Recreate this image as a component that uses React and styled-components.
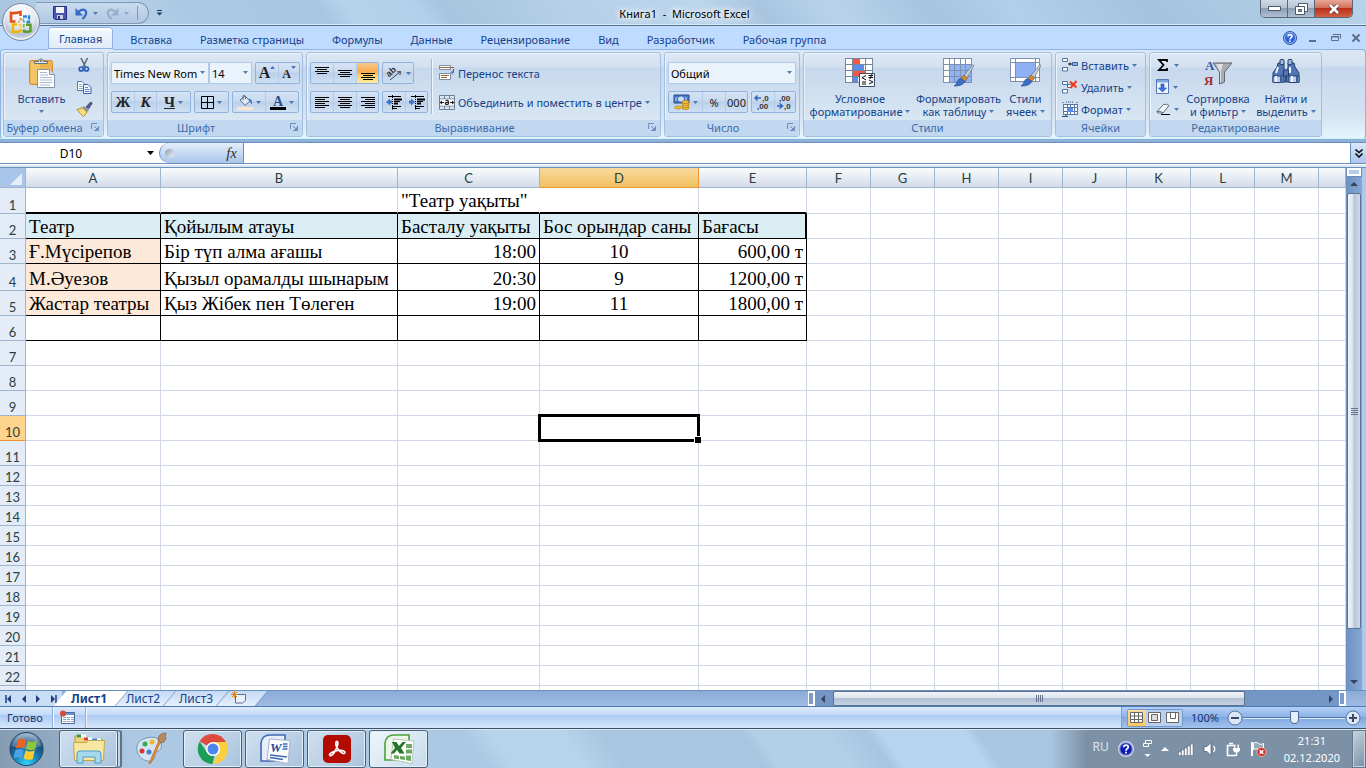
import React from "react";
import styled, { createGlobalStyle, css } from "styled-components";

const GlobalStyle = createGlobalStyle`
  * {
    box-sizing: border-box;
  }

  body {
    margin: 0;
    background: #bfdbff;
    font-family: "Noto Sans", "Open Sans", sans-serif;
    font-size: 11px;
    color: #15428b;
  }

  button,
  input,
  select {
    font: inherit;
    color: inherit;
    margin: 0;
    padding: 0;
    border: 0;
    background: none;
  }
`;

const Window = styled.div`
  height: 100vh;
  display: flex;
  flex-direction: column;
  overflow: hidden;
`;

/* ---------- title bar ---------- */

const TitleBar = styled.header`
  position: relative;
  height: 26px;
  flex: none;
  display: flex;
  align-items: flex-start;
  border-bottom: 1px solid #56718f;
  box-shadow: inset 0 -1px 0 #d9ebf8;
  background: linear-gradient(
    55deg,
    #a7c2dc 0%,
    #b9d5ed 8%,
    #adc8e2 14%,
    #a9c5e0 24%,
    #b7d3ec 26%,
    #b3cfe9 31%,
    #a8c4de 33%,
    #b5d0e8 42%,
    #bad5ec 52%,
    #a9c4df 56%,
    #b8d3eb 61%,
    #a8c3de 68%,
    #b2cee8 74%,
    #a6c2dd 84%,
    #b6d3ea 100%
  );
`;

const OfficeButton = styled.button`
  position: absolute;
  left: 1px;
  top: 2px;
  z-index: 3;
  width: 40px;
  height: 40px;
`;

const QuickAccess = styled.div`
  display: flex;
  align-items: center;
  height: 22px;
  margin: 2px 0 0 36px;
  padding: 0 10px 0 17px;
  border: 1px solid #8299b5;
  border-left: 0;
  border-radius: 0 11px 11px 0;
  background: linear-gradient(#c8daee, #b1c8e2);
`;

const QuickButton = styled.button`
  display: flex;
  align-items: center;
  gap: 5px;
  height: 18px;
  margin-right: 8px;
  opacity: ${(p) => (p.$dim ? 0.45 : 1)};
`;

const QuickDivider = styled.span`
  width: 1px;
  height: 14px;
  background: #8299b5;
`;

const QuickMore = styled.button`
  display: flex;
  align-self: center;
  margin-left: 7px;
`;

const Title = styled.h1`
  position: absolute;
  inset: 0;
  margin: 0;
  padding-left: 3px;
  text-align: center;
  line-height: 27px;
  font-size: 11px;
  font-weight: 400;
  color: #000;
  text-shadow: 0 0 6px #fff, 0 0 8px #fff, 0 0 10px #fff;
  pointer-events: none;
`;

const WindowButtons = styled.div`
  display: flex;
  height: 18px;
  margin: 0 13px 0 auto;
  border: 1px solid #5b6776;
  border-top: 0;
  border-radius: 0 0 5px 5px;
  overflow: hidden;
`;

const WindowButton = styled.button`
  width: ${(p) => (p.$close ? 37 : 27)}px;
  display: flex;
  align-items: center;
  justify-content: center;
  border-right: ${(p) => (p.$close ? 0 : 1)}px solid #5b6776;
  background: ${(p) =>
    p.$close
      ? "linear-gradient(#e8a898, #d4715a 45%, #b8301a 50%, #d2603f)"
      : "linear-gradient(#cfdae6, #b5c3d3 45%, #8d9fb4 50%, #aebfd2)"};
`;

/* ---------- ribbon ---------- */

const TabRow = styled.nav`
  display: flex;
  flex: none;
  height: 23px;
  padding: 1px 5px 0 45px;
  background: #bfdbff;
`;

const Tab = styled.button`
  padding: 0 14px;
  height: 24px;
  line-height: 23px;
  white-space: nowrap;
  ${(p) =>
    p.$active &&
    css`
      position: relative;
      z-index: 1;
      margin: 0 3px;
      padding: 0 11px;
      box-shadow: inset 0 0 0 1px #8db2e3, inset 0 2px 0 1px #fff;
      border-radius: 4px 4px 0 0;
      background: linear-gradient(#f4f9fe, #dfeaf7);
      border-bottom: 2px solid #dfeaf7;
    `}
`;

const TabTools = styled.div`
  display: flex;
  align-items: center;
  margin-left: auto;
  gap: 8px;

  button {
    display: flex;
  }
`;

const Ribbon = styled.section`
  display: flex;
  flex: none;
  gap: 3px;
  height: 90px;
  padding: 2px 2px 0;
  border: 1px solid #8db2e3;
  border-bottom: 1px solid #c9f3fb;
  border-radius: 4px;
  background: linear-gradient(#dce7f4, #d3e1f1 16px, #c5d7ee 17px, #d5e4f3 66px, #e5f5fc);
`;

const Group = styled.div`
  display: flex;
  flex-direction: column;
  width: ${(p) => p.$width}px;
  height: 85px;
  border: 1px solid #a3bfdf;
  border-radius: 3px;
  box-shadow: inset 1px 1px 0 #eaf2fa;
  background: linear-gradient(#dee8f5, #d3e0f0 14px, #c7d8ed 15px, #d9e7f3 68px);
`;

const GroupBody = styled.div`
  display: flex;
  flex: 1;
  min-height: 0;
  padding: 0 3px;
`;

const GroupTitle = styled.div`
  position: relative;
  height: 16px;
  line-height: 16px;
  padding-right: ${(p) => (p.$launcher ? 18 : 0)}px;
  text-align: center;
  white-space: nowrap;
  color: #3e6aaa;
  background: #c1d8f0;
  border-radius: 0 0 2px 2px;
`;

const Launcher = styled.button`
  position: absolute;
  right: 4px;
  top: 3px;
  display: flex;
`;

const Stack = styled.div`
  display: flex;
  flex-direction: column;
  gap: 7px;
  padding-top: 9px;
`;

const Line = styled.div`
  display: flex;
  gap: 3px;
`;

const ButtonSet = styled.div`
  display: flex;
  height: 22px;
  border: 1px solid #92b3dc;
  border-radius: 2px;
  background: linear-gradient(#d5e3f4, #c9daef 45%, #bcd0ea 50%, #cde0f3);
`;

const Tool = styled.button`
  display: flex;
  align-items: center;
  justify-content: center;
  gap: 3px;
  width: ${(p) => p.$width ?? 23}px;
  color: #222;
  background: ${(p) => (p.$on ? "linear-gradient(#f7c98d, #fba94b 45%, #ffce69 60%, #ffec9e)" : "none")};

  & + & {
    border-left: 1px solid #b3cbe8;
  }
`;

const SizeTool = styled(Tool)`
  align-items: ${(p) => (p.$small ? "center" : "flex-start")};
  gap: 0;
  padding-top: 2px;

  svg {
    align-self: flex-start;
  }
`;

const Letter = styled.span`
  font-family: "Liberation Serif", serif;
  font-size: ${(p) => p.$size ?? 15}px;
  line-height: 16px;
  font-weight: 700;
  font-style: ${(p) => (p.$italic ? "italic" : "normal")};
  text-decoration: ${(p) => (p.$underline ? "underline" : "none")};
`;

const SelectFrame = styled.label`
  position: relative;
  display: flex;
  width: ${(p) => p.$width}px;
  height: 22px;

  select {
    appearance: none;
    width: 100%;
    padding: 0 10px 0 2px;
    border: 1px solid #b0cbea;
    color: #000;
    background: #eaf2fb;
  }

  & + & {
    margin-left: -3px;
  }

  svg {
    position: absolute;
    right: 4px;
    top: 9px;
    pointer-events: none;
  }
`;

const Separator = styled.span`
  width: 2px;
  height: 55px;
  margin: 6px 6px 0 3px;
  background: linear-gradient(90deg, #9ebad9 50%, #eef5fb 50%);
`;

const TextButton = styled.button`
  display: flex;
  align-items: center;
  gap: 3px;
  height: 22px;
  white-space: nowrap;
`;

const SmallStack = styled.div`
  display: flex;
  flex-direction: column;
  padding: 1px 0 0 ${(p) => p.$left ?? 3}px;
`;

const BigButton = styled.button`
  display: flex;
  flex-direction: column;
  align-items: center;
  width: ${(p) => p.$width}px;
  padding-top: 5px;
  line-height: 13px;
  white-space: nowrap;

  & > svg {
    margin-bottom: 4px;
    flex: none;
  }
`;

const BigLine = styled.span`
  display: flex;
  align-items: center;
  gap: 3px;
  min-height: 13px;
`;

/* ---------- formula bar ---------- */

const FormulaBar = styled.div`
  display: flex;
  flex: none;
  height: 25px;
  border-top: 3px solid #8fb0d8;
  box-shadow: inset 0 1px 0 #6b8fbd;
  border-bottom: 1px solid #6b8fbd;
  background: #fff;
`;

const NameBox = styled.label`
  display: flex;
  align-items: center;
  width: 159px;
  padding: 1px 5px 0 1px;

  input {
    flex: 1;
    min-width: 0;
    padding-right: 6px;
    text-align: center;
    font-size: 12px;
    color: #000;
    outline: 0;
  }
`;

const FunctionArea = styled.div`
  display: flex;
  align-items: center;
  justify-content: space-between;
  width: 85px;
  margin-top: 1px;
  padding: 0 6px 0 5px;
  border: 1px solid #6b8fbd;
  border-width: 0 1px 0 1px;
  border-radius: 11px 0 0 11px;
  background: linear-gradient(#e4eefa, #c7daf3 50%, #a9c5eb);
`;

const Dimple = styled.span`
  width: 9px;
  height: 9px;
  border-radius: 50%;
  background: linear-gradient(135deg, #8d9bb0, #eef3fa);
`;

const FxButton = styled.button`
  font: italic 400 15px "Liberation Serif", serif;
  color: #333;
`;

const FormulaInput = styled.input`
  flex: 1;
  min-width: 0;
  outline: 0;
`;

const Expand = styled.button`
  display: flex;
  align-items: center;
  justify-content: center;
  width: 16px;
  margin-top: 1px;
  border-left: 1px solid #6b8fbd;
  background: linear-gradient(#d9e8fb, #aac6ec);
`;

const Splitter = styled.div`
  flex: none;
  height: 4px;
  background: #dbe8f7;
  border-bottom: 1px solid #6b8fbd;
  border-top: 1px solid #fff;
`;

/* ---------- worksheet ---------- */

const Workspace = styled.main`
  display: flex;
  flex: 1;
  min-height: 0;
`;

const SheetArea = styled.div`
  flex: 1;
  min-width: 0;
  overflow: hidden;
  background: #fff;
`;

const Sheet = styled.table`
  width: 100%;
  table-layout: fixed;
  border-collapse: separate;
  border-spacing: 0;

  th {
    padding: 0;
    font-family: Lato, "Noto Sans", sans-serif;
    font-size: 13px;
    line-height: 16px;
    font-weight: 400;
    color: #2a4040;
  }
`;

const ColHead = styled.th`
  height: 20px;
  border-right: 1px solid ${(p) => (p.$on ? "#f29536" : "#9eb6ce")};
  border-bottom: 1px solid ${(p) => (p.$on ? "#f29536" : "#9eb6ce")};
  background: ${(p) => (p.$on ? "linear-gradient(#f9d99f, #f1c15f)" : "linear-gradient(#f9fcfd, #d3dbe9)")};
`;

const Corner = styled.th`
  height: 20px;
  border: 1px solid #9eb6ce;
  border-width: 0 1px 1px 0;
  background: #a9c4e9;

  svg {
    display: block;
    margin: 2px 3px 0 auto;
  }
`;

const RowHead = styled.th`
  && {
    vertical-align: bottom;
  }
  border-right: 1px solid ${(p) => (p.$on ? "#f29536" : "#9eb6ce")};
  border-bottom: 1px solid ${(p) => (p.$on ? "#f29536" : "#9eb6ce")};
  background: ${(p) => (p.$on ? "#ffd58d" : "#e4ecf7")};
`;

const Row = styled.tr`
  height: ${(p) => p.$height}px;
`;

const Cell = styled.td`
  position: relative;
  padding: 0 3px 1px;
  vertical-align: bottom;
  white-space: nowrap;
  font-family: "Liberation Serif", serif;
  font-size: 19px;
  line-height: 21px;
  color: #000;
  text-align: ${(p) => p.$align ?? "left"};
  background: ${(p) => p.$fill ?? "#fff"};
  border-right: ${(p) => (p.$thickRight ? 2 : 1)}px solid
    ${(p) => (p.$spill ? "#fff" : p.$boxed ? "#000" : "#d0d7e5")};
  border-bottom: ${(p) => (p.$thickBottom ? 2 : 1)}px solid
    ${(p) => (p.$boxed || p.$thickBottom ? "#000" : "#d0d7e5")};
`;

const Selection = styled.span`
  position: absolute;
  z-index: 1;
  inset: -2px;
  border: 3px solid #000;

  &::after {
    content: "";
    position: absolute;
    right: -4px;
    bottom: -4px;
    width: 6px;
    height: 6px;
    background: #000;
    border: 1px solid #fff;
    border-width: 1px 0 0 1px;
  }
`;

const VScroll = styled.div`
  display: flex;
  flex-direction: column;
  align-items: center;
  width: 16px;
  background: linear-gradient(90deg, #6c92c2, #86a7d2);
`;

const VSplit = styled.span`
  width: 14px;
  height: 8px;
  border: 2px solid #fff;
  outline: 1px solid #6b8fbd;
  background: #b7cce6;
`;

const ScrollArrow = styled.button`
  display: flex;
  align-items: center;
  justify-content: center;
  width: 16px;
  height: 16px;
  flex: none;
`;

const VThumb = styled.div`
  display: flex;
  flex-direction: column;
  align-items: center;
  justify-content: center;
  gap: 1px;
  width: 14px;
  flex: 1;
  margin: 1px 0 45px;
  border: 1px solid #5b7390;
  border-radius: 2px;
  background: linear-gradient(90deg, #f1f5fa, #dbe3ed 40%, #b6c6d9 50%, #cfdbe8);
`;

const Grip = styled.i`
  width: ${(p) => (p.$vertical ? 1 : 7)}px;
  height: ${(p) => (p.$vertical ? 7 : 1)}px;
  background: #64748a;
`;

const Edge = styled.div`
  width: 4px;
  background: #aec9ee;
`;

/* ---------- sheet tabs ---------- */

const SheetBar = styled.div`
  display: flex;
  flex: none;
  height: 17px;
  border-top: 1px solid #6b8fbd;
  border-bottom: 1px solid #4e7ab5;
  background: linear-gradient(#8aabd9, #a0bbe1);
`;

const SheetNav = styled.div`
  display: flex;
  align-items: center;
  justify-content: space-between;
  width: 62px;
  padding: 0 5px;
  background: #c9ddf6;

  button {
    display: flex;
  }
`;

const SheetTabs = styled.div`
  display: flex;
`;

const SheetTab = styled.button`
  position: relative;
  width: ${(p) => p.$width ?? 54}px;
  margin-right: ${(p) => (p.$active ? 0 : -1)}px;
  font-size: 12px;
  line-height: 14px;
  font-weight: ${(p) => (p.$active ? 700 : 400)};
  z-index: ${(p) => (p.$active ? 2 : 1)};

  &::before {
    content: "";
    position: absolute;
    z-index: -1;
    inset: 0 -6px 0 ${(p) => (p.$active ? -2 : 0)}px;
    border: 1px solid #7f9fc9;
    border-width: 0 1px 0 ${(p) => (p.$active ? 0 : 1)}px;
    transform: skewX(-40deg);
    background: ${(p) => (p.$active ? "#fff" : "linear-gradient(#c3d9f5, #e6f0fc)")};
  }
`;

const HScroll = styled.div`
  display: flex;
  flex: 0 1 538px;
  margin: 0 20px 0 auto;
  background: #7396c4;
`;

const HSplit = styled.span`
  width: 7px;
  height: 15px;
  border: 2px solid #fff;
  border-left-width: 1px;
  background: #7d9dc8;
`;

const HThumb = styled.div`
  display: flex;
  align-items: center;
  justify-content: center;
  gap: 1px;
  flex: 0 1 412px;
  margin-left: 2px;
  height: 15px;
  border: 1px solid #5b7390;
  border-radius: 2px;
  background: linear-gradient(#f1f5fa, #dbe3ed 45%, #b0c1d4 50%, #c6d3e1);
`;

const HTrackEnd = styled.div`
  flex: 1;
  display: flex;
  justify-content: flex-end;
`;

/* ---------- status bar ---------- */

const StatusBar = styled.div`
  display: flex;
  align-items: stretch;
  flex: none;
  height: 22px;
  border-bottom: 1px solid #3c4f68;
  color: #15356e;
  background: linear-gradient(#dceafc, #c4dbf9 35%, #aecbf3 40%, #d3e4fb 95%);
`;

const StatusPart = styled.div`
  display: flex;
  align-items: center;
  padding: 0 9px 1px 7px;
  border-right: 1px solid #8fb0dd;
  box-shadow: 1px 0 0 #f2f7fe;
`;

const StatusRight = styled.div`
  display: flex;
  align-items: center;
  margin-left: auto;
  padding: 0 5px;
  gap: 8px;
  border-left: 1px solid #7f9fc9;
  background: linear-gradient(#b3cff6, #8fb4e8 45%, #7fa7e2 50%, #a3c3ef);
`;

const Views = styled.div`
  display: flex;
  height: 18px;
  border: 1px solid #7398cc;
  border-radius: 2px;
`;

const ViewButton = styled.button`
  display: flex;
  align-items: center;
  justify-content: center;
  width: 18px;
  background: ${(p) => (p.$on ? "linear-gradient(#fbdba0, #ffc65e)" : "#b9d0ee")};
`;

const Zoom = styled.div`
  display: flex;
  align-items: center;

  button {
    display: flex;
  }

  input {
    appearance: none;
    width: 102px;
    height: 14px;
    background: linear-gradient(#0000 6px, #5276ab 6px, #5276ab 7px, #e1ecfb 7px, #e1ecfb 8px, #0000 8px);
  }

  input::-webkit-slider-thumb {
    appearance: none;
    width: 9px;
    height: 13px;
    border: 1px solid #4d6a98;
    border-radius: 1px 1px 5px 5px;
    background: #e6eef9;
  }
`;

/* ---------- taskbar ---------- */

const Taskbar = styled.footer`
  display: flex;
  flex: none;
  height: 39px;
  border-top: 1px solid #dbe9f5;
  background:
    linear-gradient(90deg, #8198aee8 0, #8198ae88 70px, #8198ae00 130px, #8198ae00 calc(100% - 315px), #7d91a6 calc(100% - 280px)),
    linear-gradient(55deg, #adc8e2 0 35%, #b8d4ed 37% 42%, #a9c5df 45% 55%, #b4cfe8 56% 61%, #a9c4df 64%, #b7d3ed 65% 71%, #a9c5e0 72% 100%);
`;

const StartButton = styled.button`
  display: flex;
  width: 36px;
  margin: 0 14px 0 9px;
`;

const TaskList = styled.div`
  display: flex;
  gap: 3px;
`;

const TaskButton = styled.button`
  display: flex;
  align-items: center;
  justify-content: center;
  width: 59px;
  height: 38px;
  border: 1px solid ${(p) => (p.$idle ? "transparent" : "#495f78")};
  border-radius: 3px;
  box-shadow: ${(p) =>
    p.$idle
      ? "none"
      : `inset 0 0 0 1px #e3eff9${p.$stacked ? ", 3px 0 0 -1px #c3d6e8, 4px 0 0 #5d738b" : ""}`};
  background: ${(p) =>
    p.$idle ? "none" : p.$active ? "linear-gradient(135deg, #eff6fb, #c6dbec)" : "linear-gradient(135deg, #cfdfee, #aac4de)"};
`;

const Tray = styled.div`
  display: flex;
  align-items: center;
  margin-left: auto;
  padding-right: 12px;
  gap: 9px;
  color: #fff;
`;

const Language = styled.span`
  font-size: 12px;
  line-height: 16px;
  padding-bottom: 4px;
  color: #dfe6ee;
`;

const Clock = styled.time`
  margin-left: 8px;
  text-align: center;
  font-size: 11px;
  line-height: 17px;
`;

const ShowDesktop = styled.button`
  width: 14px;
  border: 1px solid #66788c;
  box-shadow: inset 0 0 0 1px #c2d0dd;
  background: linear-gradient(135deg, #c5d2de, #7d91a6);
`;

/* ---------- icons ---------- */

const CaretMark = styled.svg`
  flex: none;
`;

const Caret = ({ color = "#4c78b4", w = 5 }) => (
  <CaretMark width={w} height={w > 5 ? 4 : 3} viewBox="0 0 6 3" preserveAspectRatio="none">
    <path d="M0 0h6L3 3z" fill={color} />
  </CaretMark>
);

const Triangle = ({ dir, color = "#33435c", size = 8, bar }) => {
  const turn = { up: 0, right: 90, down: 180, left: 270 }[dir];
  return (
    <svg width={size} height={size} viewBox="0 0 8 8">
      <g transform={`rotate(${turn} 4 4)`}>
        <path d="M0 6 4 2l4 4z" fill={color} />
        {bar && <path d="M0 1h8" stroke={color} strokeWidth="1.5" />}
      </g>
    </svg>
  );
};

const OfficeLogo = () => (
  <svg width="40" height="40" viewBox="0 0 40 40">
    <defs>
      <radialGradient id="orb" cx=".5" cy=".25" r=".8">
        <stop offset="0" stopColor="#fff" />
        <stop offset=".5" stopColor="#e3e8f0" />
        <stop offset=".75" stopColor="#b6c1d1" />
        <stop offset="1" stopColor="#f4f7fb" />
      </radialGradient>
    </defs>
    <circle cx="20" cy="20" r="18.500" fill="url(#orb)" stroke="#7489a5" />
    <circle cx="20" cy="20" r="17" fill="none" stroke="#fff" opacity=".8" />
    <g fill="none">
      <path d="M14.500 19.500H10V11q4.500.5 9.500-1v4" stroke="#e4501a" strokeWidth="2.600" />
      <path d="M19.700 16v2.500M17 19.700h1.500" stroke="#f08a2c" strokeWidth="2" />
      <path d="M22 14.500h6V20h-3" stroke="#2f86d6" strokeWidth="2.400" strokeDasharray="4 1" />
      <path d="M22.500 16.500v3.300h1.500" stroke="#5aa5e4" strokeWidth="1.600" />
      <path d="M16 22.500h-4V30q3 .5 7.500-1v-2" stroke="#f3b300" strokeWidth="2.400" />
      <path d="M17.500 22.700h2v2.800" stroke="#f8cb46" strokeWidth="1.800" />
      <path d="M25 22.700h4.500v6.500q-3 1-6.500.3v-2" stroke="#559c28" strokeWidth="2.400" />
      <path d="M22.700 25.800v-3h1" stroke="#85bd4c" strokeWidth="1.800" />
    </g>
  </svg>
);

const SaveIcon = () => (
  <svg width="14" height="14" viewBox="0 0 14 14">
    <path d="M.5.5h13v13H2l-1.500-1.500z" fill="#4a55b5" stroke="#26307f" />
    <path d="M3 1h8v6H3z" fill="#f2f5fb" />
    <path d="M4 9h6v4H4z" fill="#c7cfdf" />
    <path d="M5 10h2v3H5z" fill="#26307f" />
  </svg>
);

const UndoIcon = ({ flip }) => (
  <svg width="13" height="13" viewBox="0 0 13 13">
    <g transform={flip ? "matrix(-1 0 0 1 13 0)" : undefined}>
      <path d="M3.500 5C7 1 12 2.500 11 7c-.4 2-1.800 3.500-3.500 5" fill="none" stroke={flip ? "#6f86a6" : "#3568c4"} strokeWidth="2.200" />
      <path d="M.5 1v7.500H8z" fill={flip ? "#6f86a6" : "#3568c4"} />
    </g>
  </svg>
);

const MoreIcon = () => (
  <svg width="7" height="6" viewBox="0 0 7 6">
    <path d="M1 .5h5" stroke="#1e3a6b" />
    <path d="M.5 2.500h6l-3 3z" fill="#1e3a6b" />
  </svg>
);

const HelpIcon = ({ size = 14, dark }) => (
  <svg width={size} height={size} viewBox="0 0 14 14">
    <circle cx="7" cy="7" r="6.500" fill={dark ? "#0a1fb0" : "#2c63d8"} stroke={dark ? "#d5dbe6" : "#305aa8"} />
    <circle cx="7" cy="7" r="5.500" fill="none" stroke="#fff" opacity=".8" strokeWidth=".7" />
    <path d="M5 5.500C5 3 9 3 9 5.300 9 6.700 7 6.700 7 8.500M7 9.500v1.500" fill="none" stroke="#fff" strokeWidth="1.600" />
  </svg>
);

const LauncherIcon = () => (
  <svg width="8" height="8" viewBox="0 0 8 8">
    <path d="M.5 6V.5H6" fill="none" stroke="#6c8fbd" />
    <path d="M3 3l3 3M7.500 3v4.500H3" fill="none" stroke="#6c8fbd" />
    <path d="M4 7h3V4z" fill="#6c8fbd" />
  </svg>
);

const PasteIcon = () => (
  <svg width="28" height="30" viewBox="0 1 28 30">
    <rect x="1.500" y="3.500" width="23" height="24" rx="2" fill="#eeb44d" stroke="#cc8e2f" />
    <path d="M3 5h9v21H3z" fill="#f8cf7c" opacity=".6" />
    <path d="M6.500 6.500V4.500h4Q11 1.800 13 1.800t2.500 2.700h4v2z" fill="#dfe4ea" stroke="#6a7480" />
    <circle cx="13" cy="4" r="1" fill="#5b6570" />
    <path d="M9.500 12.500h12l5 5v13h-17z" fill="#fff" stroke="#8294b0" />
    <path d="M21.500 12.500v5h5" fill="#d5dfee" stroke="#8294b0" />
    <path d="M12 15.500h7M12 18h8M12 20.500h12M12 23h12M12 25.500h12M12 28h10" stroke="#aab8cf" />
  </svg>
);

const CutIcon = () => (
  <svg width="16" height="16" viewBox="0 0 16 16">
    <path d="M5 1l4.500 9M11.500 1L7 10" stroke="#5c6a80" strokeWidth="1.600" />
    <circle cx="5.200" cy="12" r="2" fill="none" stroke="#2b5cb8" strokeWidth="1.700" />
    <circle cx="10.500" cy="12" r="2" fill="none" stroke="#2b5cb8" strokeWidth="1.700" />
  </svg>
);

const CopyIcon = () => (
  <svg width="16" height="16" viewBox="0 0 16 16">
    <path d="M1.500 2.500H6l3 3v6H1.500z" fill="#fff" stroke="#5478b4" />
    <path d="M3 5.500h3M3 7.500h4M3 9.500h4" stroke="#8ea9d4" />
    <path d="M7.500 5.500h4.500l3 3v6H7.500z" fill="#eef4fd" stroke="#3a63a8" />
    <path d="M9 8.500h3M9 10.500h4.500M9 12.500h4.500" stroke="#5d82c0" />
  </svg>
);

const BrushIcon = () => (
  <svg width="17" height="16" viewBox="0 0 17 16">
    <path d="M10 6l4-4.500q2-1 2 1L12.500 8z" fill="#5a5a9c" stroke="#36366e" strokeWidth=".7" />
    <path d="M8 5l5 4.500-2 1.500-5-4.500z" fill="#8b93a5" />
    <path d="M6 6.500L11 11q-1.500 3-3.500 4.500Q3 12 1 8.500 4 8 6 6.500z" fill="#f2d566" stroke="#a87f24" strokeWidth=".8" />
    <path d="M3.500 9.500l4 4.500M6 8.500l3 4" stroke="#fff1ac" />
  </svg>
);

const BordersIcon = () => (
  <svg width="13" height="13" viewBox="0 0 13 13">
    <path d="M.5.5h12v12H.5zM6.500 0v13M0 6.500h13" fill="none" stroke="#000" />
  </svg>
);

const FillIcon = () => (
  <svg width="16" height="16" viewBox="0 0 16 16">
    <path d="M3 6l5-4 5 5-5 4.500z" fill="#dfe7f3" stroke="#5a6f90" />
    <path d="M6 6V2q1-2 2.500 0v3" fill="none" stroke="#5a6f90" />
    <path d="M11.500 4.500q4 0 3.500 6-2-1-2-4z" fill="#3b6fd0" />
    <path d="M0 13h16v3H0z" fill="#fde4d0" />
  </svg>
);

const FontColorIcon = () => (
  <svg width="16" height="19" viewBox="0 0 16 19">
    <text x="3" y="13" fontFamily="Liberation Serif" fontSize="14" fontWeight="700" fill="#2c4f8f">A</text>
    <path d="M0 14h16v3H0z" />
  </svg>
);

const alignWidths = {
  left: [[0, 14], [0, 10], [0, 14], [0, 10], [0, 14], [0, 10]],
  center: [[0, 14], [2, 12], [0, 14], [2, 12], [0, 14], [2, 12]],
  right: [[0, 14], [4, 14], [0, 14], [4, 14], [0, 14], [4, 14]],
};

const AlignIcon = ({ kind }) => (
  <svg width="14" height="13" viewBox="0 0 14 13">
    {alignWidths[kind].map(([a, b], i) => (
      <path key={i} d={`M${a} ${i * 2 + 1.5}H${b}`} stroke="#000" />
    ))}
  </svg>
);

const VAlignIcon = ({ y }) => (
  <svg width="14" height="18" viewBox="0 0 14 18">
    {[0, 1, 2, 3].map((i) => (
      <path key={i} d={i % 2 ? `M2 ${y + i * 2}H12` : `M0 ${y + i * 2}H14`} stroke="#000" />
    ))}
  </svg>
);

const IndentIcon = ({ more }) => (
  <svg width="16" height="15" viewBox="0 0 16 15">
    <path d="M2 1.500h13M6 11.500h9M6 13.500h5" stroke="#000" />
    <path d="M8 4.500h8M8 8.500h4" stroke="#000" strokeWidth="2" />
    <path d="M8 6.500h6" stroke="#000" />
    <path d="M6.500 0v14.500" stroke="#000" strokeDasharray="1 1" />
    <path d={more ? "M6 7L2 3.500v2H0v3h2v2z" : "M0 7l4-3.500v2h2v3H4v2z"} fill="#3b74d6" />
  </svg>
);

const OrientationIcon = () => (
  <svg width="17" height="17" viewBox="0 0 17 17">
    <path d="M4 15L14.500 6.500M14.500 6.500l-3.500.4M14.500 6.500l-.6 3.500" stroke="#444" fill="none" />
    <text x="2" y="12" transform="rotate(-42 3 11)" fontFamily="Liberation Sans" fontSize="9" fontWeight="700" fill="#333">
      ab
    </text>
  </svg>
);

const WrapIcon = () => (
  <svg width="16" height="16" viewBox="0 0 16 16">
    <path d="M.5.5h11v4H.5zM.5 8.500h11v6H.5z" fill="#fff" stroke="#7d8ea6" />
    <path d="M1 2.500h14" stroke="#9a6a30" />
    <path d="M2 10.500h8M2 12.500h6" stroke="#9a6a30" />
    <path d="M14.500 4v3.500h-2M14 5.500l-2 2 2 2" stroke="#4466a5" fill="none" />
  </svg>
);

const MergeIcon = () => (
  <svg width="16" height="15" viewBox="0 0 16 15">
    <path d="M.5.5h15v14H.5z" fill="#dde6f2" stroke="#6f8099" />
    <path d="M0 4h16M0 11h16M5.500 0v4M10.500 0v4M5.500 11v4M10.500 11v4" stroke="#6f8099" />
    <path d="M1 4.500h14v6H1z" fill="#fff" />
    <path d="M.5 7.500L3 5.500v4zM15.500 7.500L13 5.500v4z" fill="#222" />
    <path d="M3 7.500h2M11 7.500h2" stroke="#222" />
    <path d="M6.500 5.800q3-1 3 1v2.500M9.500 7.500q-3.200-.3-3.200 1t3.200.6" fill="none" stroke="#222" strokeWidth="1.200" />
  </svg>
);

const MoneyIcon = () => (
  <svg width="17" height="16" viewBox="0 0 17 16">
    <path d="M1 1h15v8H1z" fill="#4a78c4" stroke="#27498a" />
    <ellipse cx="8" cy="5" rx="3" ry="2.600" fill="#c9dcf5" />
    <path d="M3 3v4M13 3v4" stroke="#c9dcf5" />
    <g fill="#f3c33c" stroke="#a97912" strokeWidth=".7">
      <ellipse cx="5" cy="13.500" rx="3.500" ry="1.500" />
      <ellipse cx="12.500" cy="14" rx="3.500" ry="1.500" />
      <ellipse cx="12.500" cy="12" rx="3.500" ry="1.500" />
      <ellipse cx="12.500" cy="10" rx="3.500" ry="1.500" />
      <ellipse cx="12.500" cy="8" rx="3.500" ry="1.500" />
    </g>
  </svg>
);

const DecimalIcon = ({ less }) => (
  <svg width="18" height="18" viewBox="0 0 18 18">
    <g fontFamily="Liberation Sans" fontSize="8" fontWeight="700" fill="#333">
      <text x={less ? 3 : 8} y="8">{less ? ",00" : ",0"}</text>
      <text x={less ? 8 : 3} y="16">{less ? ",0" : ",00"}</text>
    </g>
    <path d={less ? "M1 13h5M3.500 10.500L6.500 13l-3 2.500" : "M1 5h6M3.500 2.500L1 5l2.500 2.500"} stroke="#2f66cc" strokeWidth="1.500" fill="none" />
  </svg>
);

const gridLines = (x, y, w, h, cols, rows) => {
  let d = "";
  for (let i = 0; i <= cols; i++) d += `M${x + Math.round((w * i) / cols) + 0.5} ${y}v${h + 1}`;
  for (let i = 0; i <= rows; i++) d += `M${x} ${y + Math.round((h * i) / rows) + 0.5}h${w + 1}`;
  return d;
};

const ConditionalIcon = () => (
  <svg width="31" height="30" viewBox="0 0 31 30">
    <path d="M1 1h27v24H1z" fill="#fff" />
    <path d="M8 1h6v6H8zM8 13h12v6H8z" fill="#f05a45" />
    <path d="M8 7h11v6H8zM8 19h5v6H8z" fill="#5c8de8" />
    <path d={gridLines(0, 0, 27, 24, 4, 4)} stroke="#75859f" />
    <path d="M14.500 15.500h15v13h-15z" fill="#f8f9fb" stroke="#3f4d66" />
    <path d="M21 17.500l-4 2.200 4 2.200M17 24h4M17 26h4M23.500 17.500h4.500M23.500 19.500h4.500M27 16l-2 5M24 22l4 2-4 2" stroke="#111" fill="none" />
  </svg>
);

const PaintBrush = () => (
  <g>
    <path d="M29.500 7q1.500-1 1 1.500L24 20l-3-2.500z" fill="#c3ccd9" stroke="#6d788a" strokeWidth=".7" />
    <path d="M21 17l3.500 3-2.500 3.500-4-3z" fill="#cf8a3d" stroke="#87551f" strokeWidth=".6" />
    <path d="M18 20.500l4 3q-3 5-11 4.500 3-2 3-4.500 1.500-3 4-3z" fill="#3c6fc2" stroke="#244a90" strokeWidth=".6" />
  </g>
);

const FormatTableIcon = () => (
  <svg width="32" height="30" viewBox="0 0 32 30">
    <path d="M1 1h27v23H1z" fill="#fff" />
    <path d="M7 6h21v18H7z" fill="#91b3f3" />
    <path d={gridLines(0, 0, 28, 24, 5, 4)} stroke="#7d90ae" />
    <PaintBrush />
  </svg>
);

const CellStylesIcon = () => (
  <svg width="32" height="30" viewBox="0 0 32 30">
    <path d="M.5.500h29v23h-29z" fill="#fff" stroke="#7d90ae" />
    <path d="M5.500 0v24M25.500 0v24M0 4.500h30M0 19.500h30" stroke="#7d90ae" />
    <path d="M6 5h19v14H6z" fill="#8fb0f5" />
    <PaintBrush />
  </svg>
);

const InsertCellsIcon = () => (
  <svg width="16" height="14" viewBox="0 0 16 14">
    <path d="M.5.5h5v3h-5zM.5 9.500h5v3.500h-5z" fill="#fff" stroke="#55709b" />
    <path d="M6 6h4M8 4.500v3" stroke="#111" />
    <path d="M10.500 4.500h5v3h-5z" fill="#8fb2e8" stroke="#3b5c95" />
  </svg>
);

const DeleteCellsIcon = () => (
  <svg width="16" height="14" viewBox="0 0 16 14">
    <path d="M.5 1.500h5v3h-5zM5.500 4.500h4v3h-4zM.5 9.500h5v3.500h-5z" fill="#fff" stroke="#55709b" />
    <path d="M8 1.500l6.500 6M14.500 1L8.500 8" stroke="#ee3a1c" strokeWidth="2" />
  </svg>
);

const FormatCellsIcon = () => (
  <svg width="16" height="16" viewBox="0 0 16 16">
    <path d="M1 1v2M4 1h8M15 1v2" stroke="#2d4d85" strokeDasharray="1 1" />
    <path d="M1.500 3.500h14v10h-14z" fill="#fff" />
    <path d={gridLines(1, 3, 14, 10, 4, 3)} stroke="#5c76a3" />
    <path d="M5 7h6v4H5z" fill="#5c8de8" />
    <path d="M0 15.500h6M4 13v2" stroke="#2d4d85" />
  </svg>
);

const SumIcon = () => (
  <svg width="15" height="14" viewBox="0 0 15 14">
    <path d="M11 4V2H3l4.500 5L3 12h8v-2" fill="none" stroke="#000" strokeWidth="1.800" />
  </svg>
);

const FillDownIcon = () => (
  <svg width="14" height="16" viewBox="0 0 14 16">
    <path d="M.5.5h12v14H.5z" fill="#eef4fd" stroke="#5478b4" />
    <path d="M1 1h11v2.500H1z" fill="#7ea4e4" />
    <path d="M5 5h3v4h2.500l-4 4-4-4H5z" fill="#3b74e0" stroke="#1d4ca3" strokeWidth=".6" />
  </svg>
);

const EraserIcon = () => (
  <svg width="15" height="13" viewBox="0 0 15 13">
    <path d="M1 8.500L7.500 1.500q3-1 5.500 1L7 10H3Q.5 10 1 8.500z" fill="#f4f6fa" stroke="#5d6b80" />
    <path d="M1 8.500q3-1 6 1.500" fill="none" stroke="#5d6b80" />
    <path d="M5 11.500h9" stroke="#000" />
  </svg>
);

const SortIcon = () => (
  <svg width="30" height="30" viewBox="0 0 30 30">
    <text x="2" y="12" fontFamily="Liberation Serif" fontSize="13" fontWeight="700" fill="#2c56a8">А</text>
    <text x="1" y="27" fontFamily="Liberation Serif" fontSize="13" fontWeight="700" fill="#a03030">Я</text>
    <path d="M10 5h19l-7.500 9v10l-5 2V14z" fill="#a8acb3" stroke="#63676f" />
    <path d="M13 6h7l-2 7v11l-1 .5V14z" fill="#dddfe3" />
  </svg>
);

const BinocularsIcon = () => (
  <svg width="28" height="30" viewBox="0 0 28 30">
    <g fill="#5276b4" stroke="#25406f">
      <path d="M6 5h6v5l2 4v10H1V15l4-6zM16 5h6l1 4 4 6v9H14V14l2-4z" />
      <rect x="8" y="1.500" width="4" height="5" rx="1" fill="#9fb7de" />
      <rect x="16" y="1.500" width="4" height="5" rx="1" fill="#9fb7de" />
      <path d="M11.500 12h5v6h-5z" />
      <path d="M1 18h10v6.500H1zM17 18h10v6.500H17z" fill="#b9cdec" />
    </g>
    <path d="M4 18v6M20 18v6M6 9l-2 6M18 9v6" stroke="#edf4fd" strokeWidth="2" />
    <path d="M9 18v7M25 18v7" stroke="#3f5f9a" strokeWidth="2" />
  </svg>
);

const ExpandIcon = () => (
  <svg width="8" height="9" viewBox="0 0 8 9">
    <path d="M.5.5L4 3.500 7.500.5M.5 4.500L4 8l3.500-3.500" fill="none" stroke="#111" strokeWidth="1.600" />
  </svg>
);

const NewSheetIcon = () => (
  <svg width="16" height="13" viewBox="0 0 16 13">
    <path d="M4.500 3.500h10v6l-3 2.500h-7z" fill="#eaf1fb" stroke="#5c6f8c" />
    <path d="M3.500 0v7M0 3.500h7M1 1l5 5M6 1L1 6" stroke="#d98917" />
  </svg>
);

const MacroIcon = () => (
  <svg width="16" height="14" viewBox="0 0 16 14">
    <path d="M1.500 2.500h13v11h-13z" fill="#fff" stroke="#4f6892" />
    <path d="M2 3h12v2H2z" fill="#6b92d1" />
    <path d="M3 7.500h11M3 9.500h11M3 11.500h11" stroke="#87a0c8" strokeDasharray="3 1" />
    <circle cx="3" cy="3.500" r="3" fill="#d84a33" />
  </svg>
);

const ViewIcon = ({ kind }) => (
  <svg width="13" height="11" viewBox="0 0 13 11">
    <path d="M.5.5h12v10H.5z" fill="#fff" stroke="#666" />
    {kind === "grid" && <path d="M0 4h13M0 7.500h13M4.500 0v11M8.500 0v11" stroke="#666" />}
    {kind === "page" && <path d="M3.500 2.500h6v6h-6z" fill="#ddd" stroke="#666" />}
    {kind === "break" && <path d="M4.500 0v6.500h5V0" fill="none" stroke="#666" />}
  </svg>
);

const ZoomIcon = ({ plus }) => (
  <svg width="16" height="16" viewBox="0 0 16 16">
    <circle cx="8" cy="8" r="7" fill="#dce7f5" stroke="#5673a3" />
    <path d={plus ? "M4 8h8M8 4v8" : "M4 8h8"} stroke="#3c4a63" strokeWidth="2" />
  </svg>
);

const StartOrb = () => (
  <svg width="37" height="38" viewBox="0 0 37 38">
    <defs>
      <radialGradient id="start" cx=".5" cy=".95" r=".9">
        <stop offset="0" stopColor="#31d5fa" />
        <stop offset=".45" stopColor="#1879b4" />
        <stop offset=".75" stopColor="#174e7d" />
        <stop offset="1" stopColor="#7ea2c0" />
      </radialGradient>
    </defs>
    <circle cx="18" cy="19" r="17" fill="url(#start)" stroke="#23415f" />
    <path d="M3 16Q8 3 18 3t15 13Q18 22 3 16z" fill="#fff" opacity=".25" />
    <path d="M9 9.500q4.500-2 8.500 0l-2 9q-4-2-8.500 0z" fill="#ea6224" />
    <path d="M19.500 10.500q4 2.500 9.500-.3l-2 9q-5 2.300-9.500-.2z" fill="#8cc63c" />
    <path d="M6.600 20q4.500-2 8.500 0l-2 8.500q-4-2-8.500.3z" fill="#4aa3e8" />
    <path d="M17 20.300q4.500 2.500 9.500-.1l-2 9q-5 2-9.500-.5z" fill="#fcc92f" />
  </svg>
);

const ExplorerIcon = () => (
  <svg width="34" height="32" viewBox="0 0 34 32">
    <path d="M3 3h10l2 3h15v20H3z" fill="#efd477" stroke="#b99a3d" />
    <path d="M5 1.500h9v3H5z" fill="#fff" />
    <path d="M5 1.500h4v3H5z" fill="#2c9e43" />
    <path d="M12 4.500h9v3h-9z" fill="#fff" />
    <path d="M12 4.500h4v3h-4z" fill="#d9402e" />
    <path d="M20 5.500h9v4h-9z" fill="#fff" />
    <path d="M20 5.500h5v3h-5z" fill="#3c87dc" />
    <path d="M1.500 9.500h13l2-2h16l-1 20h-29z" fill="#f8e7a0" stroke="#c5a64b" />
    <path d="M5 30v-9q0-3 3-3h18q3 0 3 3v9h-6v-6H11v6z" fill="#a5d9f0" stroke="#4c9cc7" />
  </svg>
);

const PaletteIcon = () => (
  <svg width="34" height="34" viewBox="0 0 34 34">
    <path d="M3 19Q1 9 12 6q12-3 15 5 2 7-5 9-3 2-1 5-2 5-8 4Q5 27 3 19z" fill="#d3e5f2" stroke="#7794ad" />
    <circle cx="8" cy="19" r="2.500" fill="#d9352c" />
    <circle cx="11" cy="12" r="2.500" fill="#3ea647" />
    <circle cx="18" cy="10" r="2.500" fill="#f2b52a" />
    <circle cx="15" cy="20" r="2.500" fill="#3f7cd0" />
    <path d="M27 9L17 31l-2 1 1-3L25 8z" fill="#e69138" stroke="#a85f1b" strokeWidth=".6" />
    <path d="M24 8q0-7 8-7-1 4 0 6-2 4-5 4z" fill="#b78a5c" stroke="#7d5836" strokeWidth=".6" />
  </svg>
);

const ChromeIcon = () => (
  <svg width="32" height="32" viewBox="0 0 32 32">
    <path d="M16 16L2.600 8.300a15 15 0 0 1 26.400 1z" fill="#dd4b3e" />
    <path d="M16 9h13.200A15 15 0 0 1 15.500 31l6.500-11.500z" fill="#fdcf3f" />
    <path d="M15.500 31A15 15 0 0 1 2.700 8.500L10 19.500q2.500 4 7.500 3z" fill="#1b9d58" />
    <circle cx="16" cy="16" r="7" fill="#fff" />
    <circle cx="16" cy="16" r="5.500" fill="#4a86ec" />
  </svg>
);

const WordIcon = () => (
  <svg width="32" height="32" viewBox="0 0 32 32">
    <path d="M2 28V10q1-8 9-8h15v26z" fill="#e7eef9" stroke="#3f68b6" strokeWidth="1.600" />
    <path d="M10.500 6l20.500 1.500-2 23-21-4z" fill="#fdfdff" stroke="#a9b6cc" />
    <text x="11" y="19" fontFamily="Liberation Serif" fontSize="13" fontWeight="700" fontStyle="italic" fill="#234a9b">W</text>
    <path d="M24 11h4.500M24 13.500h4.500M23.500 16h5M11 22l17 2M11 24.500l13 2" stroke="#3f68b6" strokeWidth="1.500" />
  </svg>
);

const AcrobatIcon = () => (
  <svg width="30" height="30" viewBox="0 0 30 30">
    <rect x="1" y="1" width="28" height="28" rx="5" fill="#b30b00" />
    <path
      d="M8 21.500c-2-1.500 3-4.500 8-5s8 1 6.500 2.700c-1.700 1.500-7-3.200-8.300-7.200-.8-3-.2-5 1-4.500 1.600.8 0 6-2 9.500C11 20.500 9 22.300 8 21.500z"
      fill="none"
      stroke="#fff"
      strokeWidth="1.700"
    />
  </svg>
);

const ExcelIcon = () => (
  <svg width="32" height="32" viewBox="0 0 32 32">
    <path d="M2 27V10q1-8 9-8h15v25z" fill="#ecf5e9" stroke="#4aa33a" strokeWidth="1.600" />
    <path d="M10.500 6L31 8l-2 22.500-21-4z" fill="#fff" stroke="#b4c6b0" />
    <path d="M23 11h6v4h-6zM23 16.500h6v4h-6zM11 22l5 .7v3.500l-5-.8zM17 23l5 .6v3.400l-5-.7zM23 22.500h5v5.500l-5-.8z" fill="#6aa963" />
    <path d="M9 9h4.500l2.500 4 3.500-4H23l-5 6 3.500 5.500h-5L14 17l-3 3.500H7.500L12 15z" fill="#26742c" />
  </svg>
);

const LanguageTools = () => (
  <svg width="9" height="19" viewBox="0 0 9 19">
    <path d="M2.500.5h6v3h-6zM.5 3.500h5v3h-5z" fill="#7d91a6" stroke="#fff" />
    <path d="M1.500 14h6l-3 3z" fill="#fff" />
  </svg>
);

const NetworkIcon = () => (
  <svg width="16" height="13" viewBox="0 0 16 13">
    {[0, 1, 2, 3, 4].map((i) => (
      <rect key={i} x={i * 3 + 0.5} y={9 - i * 2} width="2.500" height={3.5 + i * 2} fill="#fff" stroke="#526276" strokeWidth=".5" />
    ))}
  </svg>
);

const SpeakerIcon = () => (
  <svg width="14" height="16" viewBox="0 0 14 16">
    <path d="M1 5.500h3L8 1.500v13l-4-4H1z" fill="#fff" stroke="#44566b" strokeWidth=".7" />
    <path d="M10.500 5q2.500 3 0 6" fill="none" stroke="#fff" strokeWidth="1.300" />
  </svg>
);

const PowerIcon = () => (
  <svg width="15" height="15" viewBox="0 0 15 15">
    <path d="M8 3.500H1.500v10H10M3 1.500h4" fill="none" stroke="#fff" strokeWidth="1.600" />
    <path d="M7 6h7v2.500L12 10.500H9L7 8.500z" fill="#fff" />
    <path d="M8.700 2.500V6M12.200 2.500V6M10.500 10v4" stroke="#fff" strokeWidth="1.400" />
  </svg>
);

const FlagIcon = () => (
  <svg width="17" height="16" viewBox="0 0 17 16">
    <path d="M2 1v14" stroke="#fff" strokeWidth="2" />
    <path d="M3.500 2q3-1.500 5 .5t5 0v6q-3 1.500-5 0t-5 0z" fill="#9aa9b8" stroke="#fff" />
    <circle cx="11.500" cy="11" r="4.500" fill="#db2f21" stroke="#fff" strokeWidth=".5" />
    <path d="M9.700 9.200l3.600 3.600M13.300 9.200l-3.600 3.600" stroke="#fff" strokeWidth="1.500" />
  </svg>
);

/* ---------- data ---------- */

const tabs = [
  "Главная",
  "Вставка",
  "Разметка страницы",
  "Формулы",
  "Данные",
  "Рецензирование",
  "Вид",
  "Разработчик",
  "Рабочая группа",
];

const columns = ["A", "B", "C", "D", "E", "F", "G", "H", "I", "J", "K", "L", "M", ""];
const widths = [135, 237, 142, 159, 108, 64, 64, 64, 64, 64, 64, 64, 64, null];

const data = {
  1: ["", "", "\"Театр уақыты\"", "", ""],
  2: ["Театр", "Қойылым атауы", "Басталу уақыты", "Бос орындар саны", "Бағасы"],
  3: ["Ғ.Мүсірепов", "Бір түп алма ағашы", "18:00", "10", "600,00 т"],
  4: ["М.Әуезов", "Қызыл орамалды шынарым", "20:30", "9", "1200,00 т"],
  5: ["Жастар театры", "Қыз Жібек пен Төлеген", "19:00", "11", "1800,00 т"],
};

const rowHeight = (n) => {
  if (n === 1) return 26;
  if (n === 4) return 27;
  return n < 12 ? 25 : 20;
};

const cellProps = (row, col) => {
  const props = {};
  if (col > 4) return props;
  if (row === 1) {
    props.$thickBottom = true;
    props.$spill = col === 2;
  }
  if (row >= 2 && row <= 6) props.$boxed = true;
  if (row === 2) {
    props.$fill = "#daeef3";
    props.$thickRight = col === 4;
  }
  if (row >= 3 && row <= 5) {
    if (col === 0) props.$fill = "#fde9d9";
    if (col === 2 || col === 4) props.$align = "right";
    if (col === 3) props.$align = "center";
  }
  return props;
};

/* ---------- parts ---------- */

function RibbonGroup({ title, width, launcher, children }) {
  return (
    <Group $width={width}>
      <GroupBody>{children}</GroupBody>
      <GroupTitle $launcher={launcher}>
        {title}
        {launcher && (
          <Launcher aria-label={title}>
            <LauncherIcon />
          </Launcher>
        )}
      </GroupTitle>
    </Group>
  );
}

function Combo({ label, value, width }) {
  return (
    <SelectFrame $width={width}>
      <select aria-label={label} defaultValue={value}>
        <option>{value}</option>
      </select>
      <Caret />
    </SelectFrame>
  );
}

function Big({ icon, lines, width }) {
  return (
    <BigButton $width={width}>
      {icon}
      <BigLine>{lines[0]}</BigLine>
      <BigLine>
        {lines[1]}
        <Caret />
      </BigLine>
    </BigButton>
  );
}

function RibbonPanel() {
  return (
    <Ribbon>
      <RibbonGroup title="Буфер обмена" width={101} launcher>
        <Big icon={<PasteIcon />} lines={["Вставить", ""]} width={69} />
        <SmallStack $left={0}>
          <TextButton aria-label="Вырезать"><CutIcon /></TextButton>
          <TextButton aria-label="Копировать"><CopyIcon /></TextButton>
          <TextButton aria-label="Формат по образцу"><BrushIcon /></TextButton>
        </SmallStack>
      </RibbonGroup>

      <RibbonGroup title="Шрифт" width={196} launcher>
        <Stack>
          <Line>
            <Combo label="Шрифт" value="Times New Rom" width={98} />
            <Combo label="Размер шрифта" value="14" width={43} />
            <ButtonSet>
              <SizeTool $width={22} aria-label="Увеличить размер">
                <Letter $size={16}>A</Letter>
                <Triangle dir="up" size={5} color="#2f5fae" />
              </SizeTool>
              <SizeTool $width={21} $small aria-label="Уменьшить размер">
                <Letter $size={12}>A</Letter>
                <Triangle dir="down" size={5} color="#2f5fae" />
              </SizeTool>
            </ButtonSet>
          </Line>
          <Line>
            <ButtonSet>
              <Tool $width={22} aria-label="Полужирный"><Letter>Ж</Letter></Tool>
              <Tool $width={22} aria-label="Курсив"><Letter $italic>К</Letter></Tool>
              <Tool $width={34} aria-label="Подчеркнутый"><Letter $underline>Ч</Letter><Caret /></Tool>
            </ButtonSet>
            <ButtonSet>
              <Tool $width={33} aria-label="Границы"><BordersIcon /><Caret /></Tool>
            </ButtonSet>
            <ButtonSet>
              <Tool $width={32} aria-label="Цвет заливки"><FillIcon /><Caret /></Tool>
              <Tool $width={33} aria-label="Цвет текста"><FontColorIcon /><Caret /></Tool>
            </ButtonSet>
          </Line>
        </Stack>
      </RibbonGroup>

      <RibbonGroup title="Выравнивание" width={355} launcher>
        <Stack>
          <Line>
            <ButtonSet>
              <Tool $width={22} aria-label="По верхнему краю"><VAlignIcon y={3.5} /></Tool>
              <Tool $width={23} aria-label="Посередине"><VAlignIcon y={6.5} /></Tool>
              <Tool $width={22} $on aria-label="По нижнему краю"><VAlignIcon y={9.5} /></Tool>
            </ButtonSet>
            <ButtonSet>
              <Tool $width={30} aria-label="Ориентация"><OrientationIcon /><Caret /></Tool>
            </ButtonSet>
          </Line>
          <Line>
            <ButtonSet>
              <Tool $width={22} aria-label="По левому краю"><AlignIcon kind="left" /></Tool>
              <Tool $width={23} aria-label="По центру"><AlignIcon kind="center" /></Tool>
              <Tool $width={22} aria-label="По правому краю"><AlignIcon kind="right" /></Tool>
            </ButtonSet>
            <ButtonSet>
              <Tool $width={22} aria-label="Уменьшить отступ"><IndentIcon /></Tool>
              <Tool $width={22} aria-label="Увеличить отступ"><IndentIcon more /></Tool>
            </ButtonSet>
          </Line>
        </Stack>
        <Separator />
        <Stack>
          <TextButton><WrapIcon />Перенос текста</TextButton>
          <TextButton><MergeIcon />Объединить и поместить в центре<Caret /></TextButton>
        </Stack>
      </RibbonGroup>

      <RibbonGroup title="Число" width={136} launcher>
        <Stack>
          <Combo label="Числовой формат" value="Общий" width={128} />
          <Line>
            <ButtonSet>
              <Tool $width={33} aria-label="Финансовый"><MoneyIcon /><Caret /></Tool>
              <Tool $width={23}>%</Tool>
              <Tool $width={22}>000</Tool>
            </ButtonSet>
            <ButtonSet>
              <Tool $width={22} aria-label="Увеличить разрядность"><DecimalIcon /></Tool>
              <Tool $width={21} aria-label="Уменьшить разрядность"><DecimalIcon less /></Tool>
            </ButtonSet>
          </Line>
        </Stack>
      </RibbonGroup>

      <RibbonGroup title="Стили" width={249}>
        <Big icon={<ConditionalIcon />} lines={["Условное", "форматирование"]} width={106} />
        <Big icon={<FormatTableIcon />} lines={["Форматировать", "как таблицу"]} width={91} />
        <Big icon={<CellStylesIcon />} lines={["Стили", "ячеек"]} width={43} />
      </RibbonGroup>

      <RibbonGroup title="Ячейки" width={91}>
        <SmallStack>
          <TextButton><InsertCellsIcon />Вставить<Caret /></TextButton>
          <TextButton><DeleteCellsIcon />Удалить<Caret /></TextButton>
          <TextButton><FormatCellsIcon />Формат<Caret /></TextButton>
        </SmallStack>
      </RibbonGroup>

      <RibbonGroup title="Редактирование" width={173}>
        <SmallStack>
          <TextButton aria-label="Сумма"><SumIcon /><Caret /></TextButton>
          <TextButton aria-label="Заполнить"><FillDownIcon /><Caret /></TextButton>
          <TextButton aria-label="Очистить"><EraserIcon /><Caret /></TextButton>
        </SmallStack>
        <Big icon={<SortIcon />} lines={["Сортировка", "и фильтр"]} width={78} />
        <Big icon={<BinocularsIcon />} lines={["Найти и", "выделить"]} width={58} />
      </RibbonGroup>
    </Ribbon>
  );
}

function Worksheet() {
  return (
    <Sheet>
      <colgroup>
        <col width="26" />
        {widths.map((w, i) => (
          <col key={i} width={w ?? undefined} />
        ))}
      </colgroup>
      <thead>
        <tr>
          <Corner aria-label="Выделить все">
            <svg width="12" height="12" viewBox="0 0 12 12">
              <path d="M12 0v12H0z" fill="#e6edf6" />
            </svg>
          </Corner>
          {columns.map((c, i) => (
            <ColHead key={i} $on={c === "D"}>{c}</ColHead>
          ))}
        </tr>
      </thead>
      <tbody>
        {Array.from({ length: 23 }, (_, r) => r + 1).map((n) => (
          <Row key={n} $height={rowHeight(n)}>
            <RowHead $on={n === 10}>{n < 23 && n}</RowHead>
            {columns.map((c, i) => (
              <Cell key={i} {...cellProps(n, i)}>
                {data[n]?.[i]}
                {n === 10 && c === "D" && <Selection />}
              </Cell>
            ))}
          </Row>
        ))}
      </tbody>
    </Sheet>
  );
}

export default function App() {
  return (
    <Window>
      <GlobalStyle />
      <TitleBar>
        <OfficeButton aria-label="Office"><OfficeLogo /></OfficeButton>
        <QuickAccess>
          <QuickButton aria-label="Сохранить"><SaveIcon /></QuickButton>
          <QuickButton aria-label="Отменить"><UndoIcon /><Caret /></QuickButton>
          <QuickButton $dim aria-label="Вернуть"><UndoIcon flip /><Caret /></QuickButton>
          <QuickDivider />
        </QuickAccess>
        <QuickMore aria-label="Настройка панели"><MoreIcon /></QuickMore>
        <Title>Книга1 &nbsp;- &nbsp;Microsoft Excel</Title>
        <WindowButtons>
          <WindowButton aria-label="Свернуть">
            <svg width="13" height="6"><path d="M.5.5h12v4H.5z" fill="#fff" stroke="#4d5967" /></svg>
          </WindowButton>
          <WindowButton aria-label="Развернуть">
            <svg width="13" height="12" viewBox="0 0 13 12">
              <path d="M3.500.5h9v8h-9z" fill="#fff" stroke="#4d5967" />
              <path d="M.5 3.500h9v8h-9z" fill="#fff" stroke="#4d5967" />
              <path d="M3.500 6.500h3v2h-3z" fill="#9aabbe" stroke="#4d5967" />
            </svg>
          </WindowButton>
          <WindowButton $close aria-label="Закрыть">
            <svg width="12" height="10" viewBox="0 0 12 10">
              <path d="M2 1l8 8M10 1L2 9" stroke="#5a3a3a" strokeWidth="4" />
              <path d="M2 1l8 8M10 1L2 9" stroke="#fff" strokeWidth="2.500" />
            </svg>
          </WindowButton>
        </WindowButtons>
      </TitleBar>

      <TabRow>
        {tabs.map((t, i) => (
          <Tab key={t} $active={i === 0}>{t}</Tab>
        ))}
        <TabTools>
          <button aria-label="Справка"><HelpIcon /></button>
          <button aria-label="Свернуть книгу">
            <svg width="15" height="12"><path d="M4 9h7" stroke="#5d6f88" strokeWidth="2" /></svg>
          </button>
          <button aria-label="Восстановить книгу">
            <svg width="15" height="12"><path d="M5.500 2.500h7v4M3.500 4.500h7v4h-7zM5 2.500h8M3 5h8" fill="none" stroke="#5d6f88" /></svg>
          </button>
          <button aria-label="Закрыть книгу">
            <svg width="10" height="10"><path d="M1.500 1.500l7 7M8.500 1.500l-7 7" stroke="#5d6f88" strokeWidth="2" /></svg>
          </button>
        </TabTools>
      </TabRow>

      <RibbonPanel />

      <FormulaBar>
        <NameBox>
          <input aria-label="Имя" defaultValue="D10" />
          <Caret color="#000" w={7} />
        </NameBox>
        <FunctionArea>
          <Dimple />
          <FxButton>fx</FxButton>
        </FunctionArea>
        <FormulaInput aria-label="Строка формул" />
        <Expand aria-label="Развернуть строку формул"><ExpandIcon /></Expand>
      </FormulaBar>
      <Splitter />

      <Workspace>
        <SheetArea><Worksheet /></SheetArea>
        <VScroll>
          <VSplit />
          <ScrollArrow aria-label="Вверх"><Triangle dir="up" /></ScrollArrow>
          <VThumb><Grip /><Grip /><Grip /><Grip /></VThumb>
          <ScrollArrow aria-label="Вниз"><Triangle dir="down" /></ScrollArrow>
        </VScroll>
        <Edge />
      </Workspace>

      <SheetBar>
        <SheetNav>
          <button aria-label="Первый лист"><Triangle dir="left" color="#1f3f7a" bar /></button>
          <button aria-label="Предыдущий лист"><Triangle dir="left" color="#1f3f7a" /></button>
          <button aria-label="Следующий лист"><Triangle dir="right" color="#1f3f7a" /></button>
          <button aria-label="Последний лист"><Triangle dir="right" color="#1f3f7a" bar /></button>
        </SheetNav>
        <SheetTabs>
          <SheetTab $active>Лист1</SheetTab>
          <SheetTab>Лист2</SheetTab>
          <SheetTab>Лист3</SheetTab>
          <SheetTab $width={34} aria-label="Вставить лист"><NewSheetIcon /></SheetTab>
        </SheetTabs>
        <HScroll>
          <HSplit />
          <ScrollArrow aria-label="Влево"><Triangle dir="left" /></ScrollArrow>
          <HThumb><Grip $vertical /><Grip $vertical /><Grip $vertical /><Grip $vertical /></HThumb>
          <HTrackEnd>
            <ScrollArrow aria-label="Вправо"><Triangle dir="right" /></ScrollArrow>
          </HTrackEnd>
          <HSplit />
        </HScroll>
      </SheetBar>

      <StatusBar>
        <StatusPart>Готово</StatusPart>
        <StatusPart><MacroIcon /></StatusPart>
        <StatusRight>
          <Views>
            <ViewButton $on aria-label="Обычный"><ViewIcon kind="grid" /></ViewButton>
            <ViewButton aria-label="Разметка страницы"><ViewIcon kind="page" /></ViewButton>
            <ViewButton aria-label="Страничный режим"><ViewIcon kind="break" /></ViewButton>
          </Views>
          <span>100%</span>
          <Zoom>
            <button aria-label="Уменьшить"><ZoomIcon /></button>
            <input type="range" aria-label="Масштаб" min="0" max="200" defaultValue="100" />
            <button aria-label="Увеличить"><ZoomIcon plus /></button>
          </Zoom>
        </StatusRight>
      </StatusBar>

      <Taskbar>
        <StartButton aria-label="Пуск"><StartOrb /></StartButton>
        <TaskList>
          <TaskButton $stacked aria-label="Проводник"><ExplorerIcon /></TaskButton>
          <TaskButton $idle aria-label="Paint"><PaletteIcon /></TaskButton>
          <TaskButton aria-label="Chrome"><ChromeIcon /></TaskButton>
          <TaskButton aria-label="Word"><WordIcon /></TaskButton>
          <TaskButton aria-label="Acrobat"><AcrobatIcon /></TaskButton>
          <TaskButton $active aria-label="Excel"><ExcelIcon /></TaskButton>
        </TaskList>
        <Tray>
          <Language>RU</Language>
          <HelpIcon size={16} dark />
          <LanguageTools />
          <Triangle dir="up" color="#fff" />
          <NetworkIcon />
          <SpeakerIcon />
          <PowerIcon />
          <FlagIcon />
          <Clock>21:31<br />02.12.2020</Clock>
        </Tray>
        <ShowDesktop aria-label="Свернуть все окна" />
      </Taskbar>
    </Window>
  );
}
